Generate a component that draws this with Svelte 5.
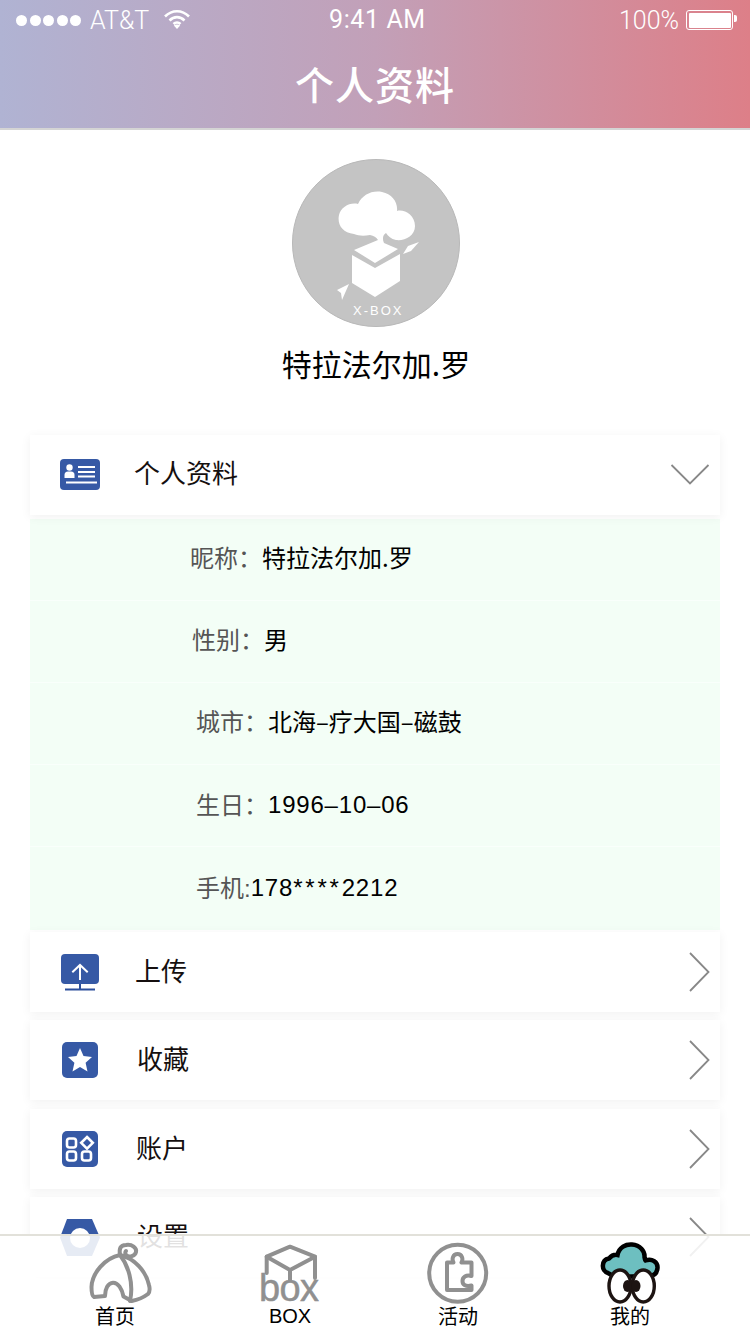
<script lang="ts">
  const fields = [
    { label: '昵称：', value: '特拉法尔加.罗', left: 160 },
    { label: '性别：', value: '男', left: 162 },
    { label: '城市：', value: '北海–疗大国–磁鼓', left: 166 },
    { label: '生日：', value: '1996–10–06', left: 166, num: true },
    { label: '手机:', value: '178', stars: '****', tail: '2212', left: 166, num: true }
  ];

  const rows = [
    { key: 'upload', label: '上传', left: 35 },
    { key: 'star', label: '收藏', left: 37 },
    { key: 'account', label: '账户', left: 36 },
    { key: 'settings', label: '设置', left: 37 }
  ];
</script>

<div class="page">
  <header class="top">
    <div class="status">
      <div class="status-left">
        <span class="dots"><i></i><i></i><i></i><i></i><i></i></span>
        <span class="carrier">AT&amp;T</span>
        <svg class="wifi" width="26" height="20" viewBox="0 0 26 20">
          <path d="M1 7.5 C8 0.5 18 0.5 25 7.5" />
          <path d="M5.5 11.5 C10 7 16 7 20.5 11.5" />
          <path d="M9.5 15 C11.5 13 14.5 13 16.5 15" />
          <path class="wifi-tip" d="M13 20 L9.8 16.6 C11.5 15.2 14.5 15.2 16.2 16.6 Z" />
        </svg>
      </div>
      <span class="time">9:41 AM</span>
      <div class="status-right">
        <span>100%</span>
        <span class="battery"><i></i></span>
      </div>
    </div>
    <h1>个人资料</h1>
  </header>

  <section class="profile">
    <svg class="avatar" width="168" height="168" viewBox="0 0 168 168">
      <circle cx="84" cy="84" r="83.5" fill="#c4c4c4" stroke="#b8b8b8" />
      <g fill="#fff">
        <path d="M62 75 C50 74 45 65 47 56 C49 48 58 43 66 45 C70 36 80 31 90 33 C100 35 106 43 105 52 C112 50 123 56 123 67 C123 77 113 82 104 81 C99 80 96 77 94 74 C91 76 90 79 92 84 L106 90 L83 104 L62 91 L86 81 C84 78 82 77 78 76 C72 77 67 77 62 75 Z" />
        <path d="M60 96 L83 109 L108 95 V122 L83 138 L60 124 Z" />
        <path d="M111 95 L116 87 L127 83 L119 92 Z" />
        <path d="M45 131 L57 125 L50 141 L49 134 Z" />
        <text x="61" y="156" class="avatar-text">X-BOX</text>
      </g>
    </svg>
    <div class="name">特拉法尔加.罗</div>
  </section>

  <section class="list">
    <div class="card">
      <svg class="icon" width="40" height="32" viewBox="0 0 40 32">
        <rect width="40" height="31" rx="4" fill="#3659a5" />
        <circle cx="9.5" cy="8.5" r="3.2" fill="#fff" />
        <path d="M4.5 16 Q4.5 12.5 8 12.5 H11 Q14.5 12.5 14.5 16 V19 H4.5 Z" fill="#fff" />
        <path d="M18 8 H35 M18 13 H35 M18 17.5 H35 M6 23.5 H37" stroke="#fff" stroke-width="1.8" />
      </svg>
      <span class="card-label" style:margin-left="34px">个人资料</span>
      <svg class="chevron" width="40" height="21" viewBox="0 0 40 21">
        <path d="M1.5 1 L20 19.5 L38.5 1" />
      </svg>
    </div>

    <div class="details">
      {#each fields as f}
        <div class="field" class:num={f.num} style:padding-left="{f.left}px">
          <span class="field-label">{f.label}</span><span class="field-value">{f.value}{#if f.stars}<span class="stars">{f.stars}</span>{f.tail}{/if}</span>
        </div>
      {/each}
    </div>

    <div class="rows">
      {#each rows as row}
        <div class="card">
          {#if row.key === 'upload'}
            <svg class="icon" width="40" height="37" viewBox="0 0 40 37">
              <rect x="1" width="38" height="30" rx="4" fill="#3659a5" />
              <path d="M20 30 V35 M5 35.5 H35" stroke="#2c4f9c" stroke-width="2" fill="none" />
              <path d="M20 26 V11 M12.3 18.3 L20 11 L27.7 18.3" stroke="#fff" stroke-width="2" fill="none" />
            </svg>
          {:else if row.key === 'star'}
            <svg class="icon" width="40" height="36" viewBox="0 0 40 36">
              <rect x="2" width="36" height="36" rx="5" fill="#3659a5" />
              <path d="M20 6 L23.5 14 L32 15 L25.6 20.8 L27.5 29.4 L20 25 L12.5 29.4 L14.4 20.8 L8 15 L16.5 14 Z" fill="#fff" />
            </svg>
          {:else if row.key === 'account'}
            <svg class="icon" width="40" height="36" viewBox="0 0 40 36">
              <rect x="2" width="36" height="36" rx="5" fill="#3659a5" />
              <g fill="none" stroke="#fff" stroke-width="2.6">
                <rect x="7" y="7.5" width="9" height="9" rx="2.5" />
                <rect x="7" y="20.5" width="9" height="9" rx="2.5" />
                <rect x="22" y="20.5" width="9" height="9" rx="2.5" />
                <path d="M27 6 L32.8 11.8 L27 17.6 L21.2 11.8 Z" />
              </g>
            </svg>
          {:else}
            <svg class="icon" width="40" height="37" viewBox="0 0 40 37">
              <path d="M7 0 H32 L40 18.5 L32 37 H7 L0 18.5 Z" fill="#3659a5" />
              <circle cx="20" cy="19" r="10" fill="#fff" />
            </svg>
          {/if}
          <span class="card-label row-label" style:margin-left="{row.left}px">{row.label}</span>
          <svg class="arrow" width="21" height="40" viewBox="0 0 21 40">
            <path d="M1 1 L19.5 20 L1 39" />
          </svg>
        </div>
      {/each}
    </div>
  </section>

  <nav class="tabbar">
    <div class="tab">
      <svg width="70" height="60" viewBox="0 0 70 60">
        <g class="tab-line">
          <path d="M40 12 C39 6 40 2 46 2 C52 1 57 5 56 9 C55 13 49 15 46 12 C45 11 45 9 46 8" />
          <path d="M40 12 C25 15 12 30 11.5 44 C11.5 50 12 53 14 54 L25 53 C25 46 28 40 33 39.7 C38 39.5 42 46 43.5 53.5 L51.7 58 C57 57 64 54 68 51 C70 49 70 46 69 42 C66 28 54 15 40 12 Z" />
          <path d="M40 12 C48 22 54 40 50 58" />
        </g>
      </svg>
      <span>首页</span>
    </div>
    <div class="tab">
      <svg width="70" height="60" viewBox="0 0 70 60">
        <g class="tab-line">
          <path d="M35 3.7 L60 13.7 L35 27 L11.7 13.7 Z" />
          <path d="M11.7 13.7 V30 M60 13.7 V35 M35 27 V37" />
        </g>
        <text x="4" y="58" class="box-word" textLength="60" lengthAdjust="spacing">box</text>
      </svg>
      <span class="tab-latin">BOX</span>
    </div>
    <div class="tab">
      <svg width="70" height="60" viewBox="0 0 70 60">
        <g class="tab-line">
          <circle cx="34.7" cy="30.3" r="28.5" />
          <path d="M24 19.5 H30.5 C28.5 16 30 11 34.5 11 C39 11 40.5 16 38.5 19.5 H48.5 V33 C43 31.5 39.5 34 39.5 38 C39.5 42 43 44 48.5 42.5 V47 H24 Z" />
        </g>
      </svg>
      <span>活动</span>
    </div>
    <div class="tab">
      <svg width="70" height="60" viewBox="0 0 70 60">
        <path class="cloud" d="M13 30 C6 28 6 17 14 15.5 C17 12 20 11.5 22.5 12 C24 4 31 1 37 1.5 C45 2 50 8 49.5 14 C50 16 50 17 50.5 17.5 C57 15 63 19 62.5 25 C62 30 59 33 54 33 L20 34 Z" />
        <ellipse class="eye" cx="25" cy="43" rx="11" ry="16" />
        <ellipse class="eye" cx="48.3" cy="43" rx="11" ry="16" />
        <ellipse cx="32.5" cy="43" rx="4.5" ry="6" fill="#1d1412" />
        <ellipse cx="41" cy="43" rx="4.5" ry="6" fill="#1d1412" />
      </svg>
      <span>我的</span>
    </div>
  </nav>
</div>

<style>
  :global(body) {
    margin: 0;
    background: #fff;
  }

  .page {
    position: relative;
    width: 750px;
    height: 1334px;
    overflow: hidden;
    background: #fff;
    font-family: 'Liberation Sans', 'Noto Sans CJK SC', sans-serif;
    color: #000;
  }

  .top {
    height: 128px;
    background: linear-gradient(90deg, #b0b3d3 0%, #c2a0b8 50%, #dd7f88 100%);
    border-bottom: 2px solid #d4d4d4;
    color: #fff;
  }

  .status {
    display: flex;
    justify-content: space-between;
    align-items: center;
    height: 40px;
    padding: 0 17px 0 16px;
    font-family: Roboto, 'Liberation Sans', sans-serif;
    font-weight: 300;
    font-size: 25px;
    position: relative;
  }

  .status-left,
  .status-right {
    display: flex;
    align-items: center;
  }

  .dots {
    display: flex;
    gap: 2.5px;
    margin-right: 9px;
  }

  .dots i {
    width: 11px;
    height: 11px;
    border-radius: 50%;
    background: #fff;
  }

  .wifi {
    margin-left: 15px;
    margin-top: -2px;
  }

  .wifi path {
    fill: none;
    stroke: #fff;
    stroke-width: 2.6;
  }

  .wifi .wifi-tip {
    fill: #fff;
    stroke: none;
  }

  .time {
    position: absolute;
    left: 329px;
    top: 5px;
    font-weight: 400;
    letter-spacing: 0.6px;
  }

  .battery {
    display: block;
    width: 42px;
    height: 15px;
    border: 1.5px solid #fff;
    border-radius: 3px;
    padding: 1.5px;
    margin-left: 7px;
    position: relative;
  }

  .battery i {
    display: block;
    height: 100%;
    background: #fff;
    border-radius: 1px;
  }

  .battery::after {
    content: '';
    position: absolute;
    right: -5px;
    top: 4px;
    width: 3px;
    height: 7px;
    background: #fff;
    border-radius: 0 2px 2px 0;
  }

  h1 {
    margin: 0;
    height: 88px;
    line-height: 86px;
    text-align: center;
    font-family: 'Noto Sans CJK SC', sans-serif;
    font-size: 39px;
    font-weight: 500;
    letter-spacing: 1px;
  }

  .profile {
    display: flex;
    flex-direction: column;
    align-items: center;
    padding-top: 29px;
    padding-left: 2px;
    height: 276px;
    box-sizing: border-box;
    margin-bottom: 29px;
  }

  .avatar {
    display: block;
    flex-shrink: 0;
  }

  .avatar-text {
    font-size: 13px;
    letter-spacing: 2px;
  }

  .name {
    margin-top: 14px;
    font-family: 'Noto Sans CJK SC', sans-serif;
    font-size: 30px;
    line-height: 44px;
  }

  .list {
    padding: 0 30px;
  }

  .card {
    display: flex;
    align-items: center;
    height: 80px;
    padding-left: 30px;
    background: #fff;
    box-shadow: 0 2px 10px rgba(0, 0, 0, 0.06);
    position: relative;
  }

  .icon {
    display: block;
    flex-shrink: 0;
  }

  .card-label {
    padding-bottom: 8px;
    font-family: 'Noto Sans CJK SC', sans-serif;
    font-size: 26px;
    color: #150f0f;
  }

  .row-label {
    padding-bottom: 6px;
  }

  .chevron {
    position: absolute;
    right: 10px;
    top: 29px;
  }

  .chevron path,
  .arrow path {
    fill: none;
    stroke: #888;
    stroke-width: 1.8;
  }

  .arrow {
    position: absolute;
    right: 10px;
    top: 20px;
  }

  .details {
    margin-top: 4px;
    background: #f3fef6;
  }

  .field {
    display: flex;
    align-items: center;
    height: 82px;
    padding-bottom: 6px;
    box-sizing: border-box;
    border-bottom: 1px solid #f9fffb;
    font-family: 'Noto Sans CJK SC', sans-serif;
    font-size: 24px;
    color: #000;
  }

  .field:last-child {
    height: 83px;
    border-bottom: none;
  }

  .field.num {
    padding-bottom: 3px;
    font-family: 'Liberation Sans', 'Noto Sans CJK SC', sans-serif;
    letter-spacing: 0.8px;
  }

  .field.num .field-label {
    padding-bottom: 2px;
    letter-spacing: 0;
  }

  .field.num .field-value {
    padding-top: 2px;
  }

  .stars {
    letter-spacing: 2.8px;
  }

  .field-label {
    color: #555;
  }

  .rows {
    display: flex;
    flex-direction: column;
    gap: 8px;
    margin-top: 2px;
  }

  .rows .card:nth-child(3) {
    margin-top: 1px;
  }

  .tabbar {
    position: absolute;
    left: 0;
    right: 0;
    top: 1234px;
    height: 100px;
    box-sizing: border-box;
    display: grid;
    grid-template-columns: 175px 175px 161px 183px;
    padding-left: 27.5px;
    background: rgba(255, 255, 255, 0.88);
    border-top: 2px solid #e2e1da;
  }

  .tab {
    display: flex;
    flex-direction: column;
    align-items: center;
    padding-top: 7px;
    font-family: 'Noto Sans CJK SC', sans-serif;
    font-size: 20px;
    line-height: 26px;
    color: #000;
  }

  .tab-latin {
    font-family: 'Liberation Sans', sans-serif;
  }

  .tab svg {
    display: block;
    overflow: visible;
    flex-shrink: 0;
  }

  .tab-line {
    fill: none;
    stroke: #909090;
    stroke-width: 4;
    stroke-linejoin: round;
    stroke-linecap: round;
  }

  .box-word {
    fill: #909090;
    stroke: #909090;
    stroke-width: 0.5;
    font-family: 'Liberation Sans', sans-serif;
    font-size: 38px;
  }

  .cloud {
    fill: #6dbfc0;
    stroke: #000;
    stroke-width: 4.5;
  }

  .eye {
    fill: #fff;
    stroke: #1d1412;
    stroke-width: 3.4;
  }
</style>
